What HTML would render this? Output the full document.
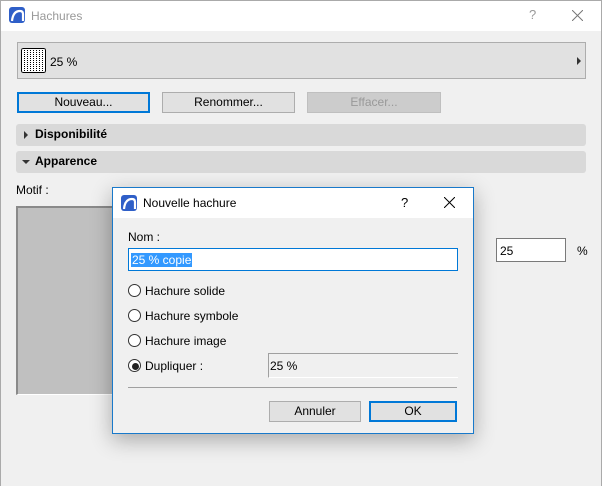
<!DOCTYPE html>
<html><head><meta charset="utf-8"><style>
*{box-sizing:border-box;margin:0;padding:0}
body{width:602px;height:486px;overflow:hidden;background:#f0f0f0;font-family:"Liberation Sans","DejaVu Sans",sans-serif;font-size:12px;color:#000;position:relative}
.a{position:absolute}
.win{left:0;top:0;width:602px;height:486px;border-left:1px solid #aaa;border-right:1px solid #aaa;border-top:1px solid #aaa}
.btn{position:absolute;background:#e1e1e1;border:1px solid #adadad;text-align:center;line-height:18px;font-size:12px}
.bar{position:absolute;background:#d9d9d9;border-radius:3px;font-weight:bold;font-size:12px;line-height:21px;padding-left:19px}
.radio{position:absolute;width:13px;height:13px;border:1px solid #333;border-radius:50%;background:#fff}
.lbl{position:absolute;font-size:12px}
</style></head><body>
<div class="a win"></div>
<div class="a" style="left:1px;top:1px;width:600px;height:30px;background:#fff"></div>
<svg class="a" style="left:9px;top:7px" width="16" height="16"><rect width="16" height="16" rx="3" fill="#2f5fc8"/><path d="M3 14 Q4 4 11 4 Q14 4 14 7 L14 14" stroke="#fff" stroke-width="2.2" fill="none"/></svg>
<div class="lbl" style="left:31px;top:9px;color:#999;font-size:12px">Hachures</div>
<div class="lbl" style="left:529px;top:7px;color:#999;font-size:13px">?</div>
<svg class="a" style="left:572px;top:10px" width="11" height="11"><path d="M0 0L11 11M11 0L0 11" stroke="#777" stroke-width="1"/></svg>

<div class="a" style="left:17px;top:42px;width:569px;height:37px;background:#e1e1e1;border:1px solid #adadad"></div>
<svg class="a" style="left:21px;top:48px" width="25" height="25" shape-rendering="crispEdges"><defs><pattern id="p" width="3" height="2" patternUnits="userSpaceOnUse"><rect width="3" height="2" fill="#fff"/><rect width="1" height="1" fill="#000"/></pattern></defs><rect x="0.5" y="0.5" width="24" height="24" rx="2" fill="url(#p)" stroke="#000"/></svg>
<div class="lbl" style="left:50px;top:55px">25 %</div>
<div class="a" style="left:577px;top:57px;width:0;height:0;border-left:4px solid #333;border-top:4px solid transparent;border-bottom:4px solid transparent"></div>

<div class="btn" style="left:17px;top:92px;width:133px;height:21px;border:2px solid #0078d7;line-height:17px">Nouveau...</div>
<div class="btn" style="left:162px;top:92px;width:133px;height:21px">Renommer...</div>
<div class="btn" style="left:307px;top:92px;width:134px;height:21px;background:#ccc;border-color:#bfbfbf;color:#999">Effacer...</div>

<div class="bar" style="left:16px;top:124px;width:570px;height:22px">Disponibilité</div>
<div class="a" style="left:24px;top:131px;border-left:4px solid #333;border-top:4px solid transparent;border-bottom:4px solid transparent"></div>
<div class="bar" style="left:16px;top:151px;width:570px;height:22px">Apparence</div>
<div class="a" style="left:22px;top:160px;border-top:4px solid #333;border-left:4px solid transparent;border-right:4px solid transparent"></div>

<div class="lbl" style="left:16px;top:183px">Motif :</div>
<div class="a" style="left:16px;top:206px;width:100px;height:189px;background:#c0c0c0;border-left:2px solid #8a8a8a;border-top:2px solid #8a8a8a;border-bottom:1px solid #fff"></div>
<div class="a" style="left:496px;top:238px;width:70px;height:24px;background:#fff;border:1px solid #7a7a7a"></div>
<div class="lbl" style="left:500px;top:244px">25</div>
<div class="lbl" style="left:577px;top:244px">%</div>

<div class="a" style="left:112px;top:187px;width:362px;height:247px;background:#f0f0f0;border:1px solid #1979ca;box-shadow:0 6px 20px rgba(0,0,0,.3)"></div>
<div class="a" style="left:113px;top:188px;width:360px;height:30px;background:#fff"></div>
<svg class="a" style="left:121px;top:195px" width="16" height="16"><rect width="16" height="16" rx="3" fill="#2f5fc8"/><path d="M3 14 Q4 4 11 4 Q14 4 14 7 L14 14" stroke="#fff" stroke-width="2.2" fill="none"/></svg>
<div class="lbl" style="left:143px;top:196px;font-size:12px">Nouvelle hachure</div>
<div class="lbl" style="left:401px;top:195px;font-size:13px">?</div>
<svg class="a" style="left:444px;top:197px" width="11" height="11"><path d="M0 0L11 11M11 0L0 11" stroke="#000" stroke-width="1"/></svg>

<div class="lbl" style="left:128px;top:230px">Nom :</div>
<div class="a" style="left:128px;top:248px;width:330px;height:23px;background:#fff;border:1px solid #0078d7"></div>
<div class="lbl" style="left:131px;top:253px;background:#3399ff;color:#fff;padding:0 1px">25 % copie</div>

<div class="radio" style="left:128px;top:284px"></div><div class="lbl" style="left:145px;top:284px">Hachure solide</div>
<div class="radio" style="left:128px;top:309px"></div><div class="lbl" style="left:145px;top:309px">Hachure symbole</div>
<div class="radio" style="left:128px;top:334px"></div><div class="lbl" style="left:145px;top:334px">Hachure image</div>
<div class="radio" style="left:128px;top:359px"></div><div class="a" style="left:132px;top:363px;width:7px;height:7px;border-radius:50%;background:#222"></div>
<div class="lbl" style="left:145px;top:359px">Dupliquer :</div>
<div class="a" style="left:268px;top:353px;width:190px;height:25px;background:#f0f0f0;border-left:1px solid #a0a0a0;border-top:1px solid #a0a0a0;border-bottom:1px solid #fff"></div>
<div class="lbl" style="left:270px;top:359px">25 %</div>
<div class="a" style="left:128px;top:387px;width:329px;height:1px;background:#a0a0a0"></div>
<div class="btn" style="left:269px;top:401px;width:92px;height:21px">Annuler</div>
<div class="btn" style="left:369px;top:401px;width:88px;height:21px;border:2px solid #0078d7;line-height:17px">OK</div>
</body></html>
